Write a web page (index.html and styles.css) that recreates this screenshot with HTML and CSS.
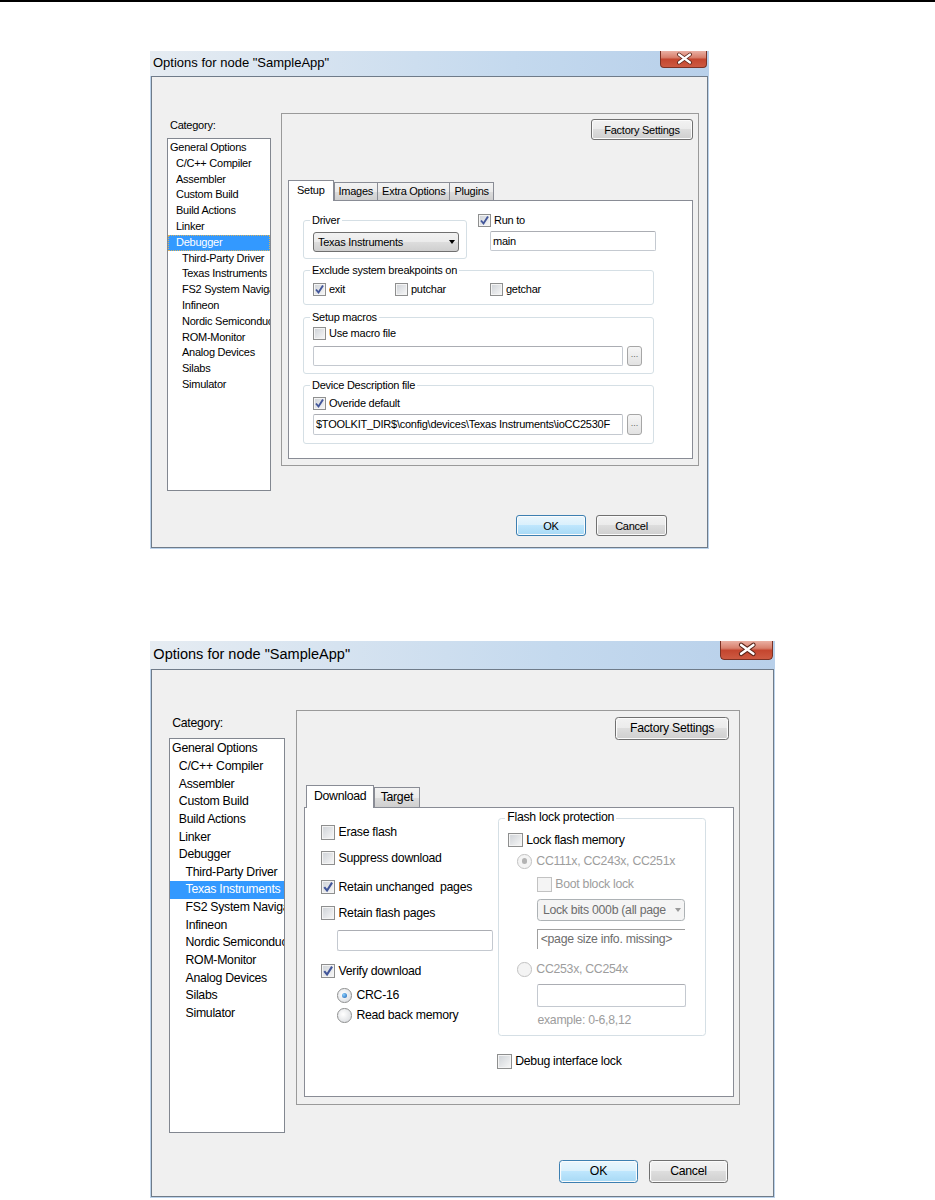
FILE: index.html
```html
<!DOCTYPE html>
<html>
	<head>
		<meta charset="utf-8">
		<title>Options for node "SampleApp"</title>
		<link rel="stylesheet" href="styles.css">
	</head>
	<body>
		<div class="rule"></div>
		<div class="page">

			<!-- Debugger > Setup -->
			<div class="window">
				<div class="titlebar">
					<span class="title">Options for node "SampleApp"</span>
					<div class="close">
						<svg width="47" height="16" viewBox="0 0 47 16">
							<path d="M18 3.5 L29 11.5 M29 3.5 L18 11.5" stroke="#5a2419" stroke-width="4" stroke-linecap="round"/>
							<path d="M18 3.5 L29 11.5 M29 3.5 L18 11.5" stroke="#fff" stroke-width="2.2" stroke-linecap="round"/>
						</svg>
					</div>
				</div>
				<div class="client">
					<div class="main">
						<div class="category">
							<div class="cat-label">Category:</div>
							<ul class="list">
								<li>General Options</li>
								<li class="l1">C/C++ Compiler</li>
								<li class="l1">Assembler</li>
								<li class="l1">Custom Build</li>
								<li class="l1">Build Actions</li>
								<li class="l1">Linker</li>
								<li class="l1 sel focus">Debugger</li>
								<li class="l2">Third-Party Driver</li>
								<li class="l2">Texas Instruments</li>
								<li class="l2">FS2 System Navigator</li>
								<li class="l2">Infineon</li>
								<li class="l2">Nordic Semiconductor</li>
								<li class="l2">ROM-Monitor</li>
								<li class="l2">Analog Devices</li>
								<li class="l2">Silabs</li>
								<li class="l2">Simulator</li>
							</ul>
						</div>
						<div class="panel">
							<div class="panel-top"><button class="btn factory">Factory Settings</button></div>
							<div class="tabs">
								<div class="tab active">Setup</div>
								<div class="tab">Images</div>
								<div class="tab">Extra Options</div>
								<div class="tab">Plugins</div>
							</div>
							<div class="tabpage setup">
								<div class="top-row">
									<div class="group driver">
										<span class="legend">Driver</span>
										<div class="combo">Texas Instruments<span class="arrow"></span></div>
									</div>
									<div class="runto">
										<label class="check"><span class="cb"><svg width="11" height="11" viewBox="0 0 11 11"><path d="M2 5.5 L4.5 8.5 L9 1.5" stroke="#42569a" stroke-width="1.9" fill="none"/></svg></span>Run to</label>
										<div class="edit main-edit">main</div>
									</div>
								</div>
								<div class="group bps">
									<span class="legend">Exclude system breakpoints on</span>
									<div class="opts">
										<label class="check"><span class="cb"><svg width="11" height="11" viewBox="0 0 11 11"><path d="M2 5.5 L4.5 8.5 L9 1.5" stroke="#42569a" stroke-width="1.9" fill="none"/></svg></span>exit</label>
										<label class="check"><span class="cb"></span>putchar</label>
										<label class="check"><span class="cb"></span>getchar</label>
									</div>
								</div>
								<div class="group macros">
									<span class="legend">Setup macros</span>
									<label class="check"><span class="cb"></span>Use macro file</label>
									<div class="file">
										<div class="edit"></div>
										<div class="more">...</div>
									</div>
								</div>
								<div class="group device">
									<span class="legend">Device Description file</span>
									<label class="check"><span class="cb"><svg width="11" height="11" viewBox="0 0 11 11"><path d="M2 5.5 L4.5 8.5 L9 1.5" stroke="#42569a" stroke-width="1.9" fill="none"/></svg></span>Overide default</label>
									<div class="file">
										<div class="edit">$TOOLKIT_DIR$\config\devices\Texas Instruments\ioCC2530F</div>
										<div class="more">...</div>
									</div>
								</div>
							</div>
						</div>
					</div>
					<div class="actions">
						<button class="btn default ok">OK</button>
						<button class="btn cancel">Cancel</button>
					</div>
				</div>
			</div>

			<!-- Debugger > Texas Instruments > Download -->
			<div class="window big">
				<div class="titlebar">
					<span class="title">Options for node "SampleApp"</span>
					<div class="close">
						<svg width="47" height="16" viewBox="0 0 47 16">
							<path d="M18 3.5 L29 11.5 M29 3.5 L18 11.5" stroke="#5a2419" stroke-width="4" stroke-linecap="round"/>
							<path d="M18 3.5 L29 11.5 M29 3.5 L18 11.5" stroke="#fff" stroke-width="2.2" stroke-linecap="round"/>
						</svg>
					</div>
				</div>
				<div class="client">
					<div class="main">
						<div class="category">
							<div class="cat-label">Category:</div>
							<ul class="list">
								<li>General Options</li>
								<li class="l1">C/C++ Compiler</li>
								<li class="l1">Assembler</li>
								<li class="l1">Custom Build</li>
								<li class="l1">Build Actions</li>
								<li class="l1">Linker</li>
								<li class="l1">Debugger</li>
								<li class="l2">Third-Party Driver</li>
								<li class="l2 sel">Texas Instruments</li>
								<li class="l2">FS2 System Navigator</li>
								<li class="l2">Infineon</li>
								<li class="l2">Nordic Semiconductor</li>
								<li class="l2">ROM-Monitor</li>
								<li class="l2">Analog Devices</li>
								<li class="l2">Silabs</li>
								<li class="l2">Simulator</li>
							</ul>
						</div>
						<div class="panel narrow">
							<div class="panel-top"><button class="btn factory">Factory Settings</button></div>
							<div class="tabs">
								<div class="tab active">Download</div>
								<div class="tab">Target</div>
							</div>
							<div class="tabpage download">
								<div class="dl-left">
									<label class="check"><span class="cb"></span>Erase flash</label>
									<label class="check suppress"><span class="cb"></span>Suppress download</label>
									<label class="check retain"><span class="cb"><svg width="11" height="11" viewBox="0 0 11 11"><path d="M2 5.5 L4.5 8.5 L9 1.5" stroke="#42569a" stroke-width="1.9" fill="none"/></svg></span>Retain unchanged&nbsp; pages</label>
									<label class="check retain-flash"><span class="cb"></span>Retain flash pages</label>
									<div class="edit pages"></div>
									<label class="check verify"><span class="cb"><svg width="11" height="11" viewBox="0 0 11 11"><path d="M2 5.5 L4.5 8.5 L9 1.5" stroke="#42569a" stroke-width="1.9" fill="none"/></svg></span>Verify download</label>
									<label class="radio crc"><span class="rb on"></span>CRC-16</label>
									<label class="radio readback"><span class="rb"></span>Read back memory</label>
								</div>
								<div class="dl-right">
									<div class="group flash">
										<span class="legend">Flash lock protection</span>
										<label class="check lockmem"><span class="cb"></span>Lock flash memory</label>
										<label class="radio off cc1"><span class="rb on"></span>CC111x, CC243x, CC251x</label>
										<label class="check off boot"><span class="cb"></span>Boot block lock</label>
										<div class="combo off lockbits"><span class="combo-text">Lock bits 000b (all page</span><span class="arrow"></span></div>
										<div class="edit static">&lt;page size info. missing&gt;</div>
										<label class="radio off cc2"><span class="rb"></span>CC253x, CC254x</label>
										<div class="edit range"></div>
										<div class="hint">example: 0-6,8,12</div>
									</div>
									<label class="check debuglock"><span class="cb"></span>Debug interface lock</label>
								</div>
							</div>
						</div>
					</div>
					<div class="actions">
						<button class="btn default ok">OK</button>
						<button class="btn cancel">Cancel</button>
					</div>
				</div>
			</div>

		</div>
	</body>
</html>
```

FILE: styles.css
```css
body{
	margin:0;
	background:#fff;
	font-family:"Liberation Sans", Arial, sans-serif;
	font-size:11px;
	letter-spacing:-0.25px;
	color:#000;
}
.rule{
	height:2px;
	background:#000;
}
.page{
	display:flex;
	flex-direction:column;
	align-items:flex-start;
	gap:92px;
	padding:49px 0 0 150px;
}

/* window chrome */
.window{
	width:559px;
	height:498px;
	box-sizing:border-box;
	display:flex;
	flex-direction:column;
	background:#bcd3eb;
	padding:0 1px 1px 1px;
}
.big{
	zoom:1.118;
}
.titlebar{
	height:25px;
	margin:0 -1px;
	display:flex;
	justify-content:space-between;
	align-items:flex-start;
	background:linear-gradient(to right, #e6ecf2 0%, #d6e3f0 30%, #c4d9ee 65%, #b8d0ea 100%);
}
.title{
	font-size:13px;
	letter-spacing:0;
	line-height:24px;
	padding-left:3px;
}
.close{
	width:47px;
	height:17px;
	margin-right:2px;
	box-sizing:border-box;
	border:1px solid #7c3225;
	border-top:none;
	border-radius:0 0 4px 4px;
	background:linear-gradient(#eab0a3 0%, #d8806d 40%, #c4462f 52%, #cd5a42 100%);
}
.close svg{
	display:block;
}
.client{
	flex:1;
	min-height:0;
	display:flex;
	flex-direction:column;
	background:#f0f0f0;
	border:1px solid #6f7b89;
}
.main{
	display:flex;
	align-items:flex-start;
	padding:36px 0 0 15px;
}

/* category list */
.category{
	width:104px;
	margin-right:10px;
}
.cat-label{
	margin:5px 0 6px 3px;
	line-height:14px;
}
.list{
	height:353px;
	box-sizing:border-box;
	margin:0;
	padding:1px 0 0 0;
	list-style:none;
	background:#fff;
	border:1px solid #828790;
	overflow:hidden;
}
.list li{
	height:15.8px;
	line-height:15.8px;
	padding-left:2px;
	white-space:nowrap;
	overflow:hidden;
}
.list .l1{
	padding-left:8px;
}
.list .l2{
	padding-left:14px;
}
.list .sel{
	background:#3399ff;
	color:#fff;
}
.list .focus{
	outline:1px dotted #d9b25c;
	outline-offset:-1px;
}

/* options panel */
.panel{
	width:418px;
	height:353px;
	box-sizing:border-box;
	border:1px solid #9a9a9a;
	padding:5px 5px 6px 6px;
	display:flex;
	flex-direction:column;
}
.panel.narrow{
	width:397px;
}
.panel-top{
	display:flex;
	justify-content:flex-end;
}
.narrow .panel-top{
	padding-right:4px;
}
.btn{
	font:inherit;
	letter-spacing:inherit;
	color:#000;
	height:21px;
	padding:0;
	box-sizing:border-box;
	border:1px solid #707070;
	border-radius:3px;
	background:linear-gradient(#f2f2f2 0%, #ebebeb 49%, #dddddd 50%, #cfcfcf 100%);
	box-shadow:inset 0 0 0 1px #fbfbfb;
}
.btn.default{
	border-color:#3c7fb1;
	background:linear-gradient(#eaf6fd 0%, #d9f0fc 49%, #bee6fd 50%, #a7d9f5 100%);
}
.factory{
	width:102px;
}
.tabs{
	display:flex;
	align-items:flex-end;
	height:21px;
	margin-top:40px;
	margin-bottom:-1px;
	position:relative;
	z-index:1;
}
.narrow .tabs{
	padding-left:2px;
}
.tab{
	height:18px;
	margin-bottom:1px;
	margin-left:-1px;
	box-sizing:border-box;
	border:1px solid #898c95;
	border-bottom:none;
	padding:0 4px;
	line-height:17px;
	background:linear-gradient(#f3f3f3 0%, #ebebeb 50%, #dddddd 51%, #cfcfcf 100%);
}
.tab.active{
	height:21px;
	margin:0;
	padding:0 8px;
	line-height:19px;
	background:#fff;
}
.narrow .tab{
	padding:0 5px;
}
.narrow .tab.active{
	padding:0 6px;
}
.tab.active + .tab{
	margin-left:0;
}
.tabpage{
	flex:1;
	background:#fff;
	border:1px solid #898c95;
}

/* controls */
.group{
	box-sizing:border-box;
	border:1px solid #d5dfe5;
	border-radius:3px;
	padding:0 0 0 9px;
}
.legend{
	display:block;
	width:max-content;
	margin:-8px 0 0 -3px;
	padding:0 2px;
	line-height:14px;
	background:#fff;
}
.check, .radio{
	display:flex;
	align-items:center;
	height:13px;
	line-height:13px;
	white-space:nowrap;
}
.cb{
	width:13px;
	height:13px;
	flex:none;
	box-sizing:border-box;
	margin-right:3px;
	border:1px solid #8e8f8f;
	background:linear-gradient(135deg, #cdd1d6, #f8f8f8);
	box-shadow:inset 0 0 0 1px #f4f4f4;
}
.cb svg{
	display:block;
}
.rb{
	width:13px;
	height:13px;
	flex:none;
	box-sizing:border-box;
	margin-right:4px;
	border:1px solid #8e8f8f;
	border-radius:50%;
	background:radial-gradient(circle at 40% 40%, #fff, #d4d7db);
	display:flex;
	align-items:center;
	justify-content:center;
}
.rb.on::after{
	content:"";
	width:5px;
	height:5px;
	border-radius:50%;
	background:radial-gradient(circle at 35% 35%, #8ad0ff, #1c5fb0);
}
.off{
	color:#9d9d9d;
}
.off .cb, .off .rb{
	border-color:#c2c2c2;
	background:#f4f4f4;
	box-shadow:none;
}
.off .rb.on::after{
	background:#b3b3b3;
}
.edit{
	height:20px;
	box-sizing:border-box;
	border:1px solid #c4c9d0;
	border-top-color:#abadb3;
	border-radius:2px;
	background:#fff;
	padding:0 2px;
	line-height:18px;
	white-space:nowrap;
	overflow:hidden;
}
.combo{
	display:flex;
	align-items:center;
	justify-content:space-between;
	height:20px;
	box-sizing:border-box;
	border:1px solid #707070;
	border-radius:3px;
	padding:0 3px 0 4px;
	background:linear-gradient(#f2f2f2 0%, #ebebeb 49%, #dddddd 50%, #cfcfcf 100%);
	white-space:nowrap;
}
.combo-text{
	overflow:hidden;
}
.arrow{
	flex:none;
	width:0;
	height:0;
	margin-left:4px;
	border-left:3.5px solid transparent;
	border-right:3.5px solid transparent;
	border-top:4px solid #000;
}
.combo.off{
	color:#6d6d6d;
	border-color:#adb2b5;
	background:#f4f4f4;
}
.combo.off .arrow{
	border-top-color:#9a9a9a;
}
.more{
	width:15px;
	height:20px;
	flex:none;
	box-sizing:border-box;
	border:1px solid #a6a6a6;
	border-radius:3px;
	background:linear-gradient(#f6f6f6, #e2e2e2);
	color:#666;
	font-size:9px;
	line-height:15px;
	text-align:center;
	letter-spacing:0;
}

/* setup tab */
.setup{
	padding:13px 0 0 14px;
}
.top-row{
	display:flex;
	align-items:flex-start;
}
.driver{
	width:164px;
	height:39px;
	margin-top:6px;
}
.driver .combo{
	width:146px;
	margin-top:5px;
}
.runto{
	margin-left:11px;
}
.main-edit{
	width:166px;
	margin:4px 0 0 12px;
}
.bps{
	width:351px;
	height:35px;
	margin-top:11px;
}
.opts{
	display:flex;
	margin-top:6px;
}
.opts .check:nth-child(1){
	width:82px;
}
.opts .check:nth-child(2){
	width:95px;
}
.macros{
	width:351px;
	height:57px;
	margin-top:12px;
}
.macros .check{
	margin-top:3px;
}
.macros .file{
	margin-top:6px;
}
.device{
	width:351px;
	height:59px;
	margin-top:11px;
}
.device .check{
	margin-top:5px;
}
.device .file{
	margin-top:4px;
}
.device .edit, .device .more{
	height:21px;
}
.device .more{
	line-height:16px;
}
.file{
	display:flex;
	gap:4px;
}
.file .edit{
	width:310px;
}

/* download tab */
.download{
	display:flex;
	align-items:flex-start;
}
.dl-left{
	width:173px;
	box-sizing:border-box;
	padding:15px 0 0 14px;
	display:flex;
	flex-direction:column;
	align-items:flex-start;
}
.suppress{
	margin-top:10px;
}
.retain{
	margin-top:13px;
}
.retain-flash{
	margin-top:10px;
}
.pages{
	width:139px;
	height:19px;
	margin:9px 0 0 15px;
}
.verify{
	margin-top:11px;
}
.crc{
	margin:9px 0 0 15px;
}
.readback{
	margin:5px 0 0 15px;
}
.dl-right{
	padding-top:9px;
}
.flash{
	width:186px;
	height:195px;
	padding-left:8px;
}
.lockmem{
	margin-top:6px;
}
.cc1{
	margin:6px 0 0 8px;
}
.boot{
	margin:8px 0 0 26px;
}
.lockbits{
	width:132px;
	margin:6px 0 0 26px;
}
.static{
	width:132px;
	height:18px;
	margin:7px 0 0 26px;
	border:none;
	border-top:1px solid #a0a0a0;
	border-left:1px solid #a0a0a0;
	border-radius:0;
	color:#6d6d6d;
	line-height:17px;
}
.cc2{
	margin:12px 0 0 8px;
}
.range{
	width:133px;
	height:21px;
	margin:6px 0 0 26px;
}
.hint{
	margin:5px 0 0 26px;
	line-height:14px;
	color:#9d9d9d;
}
.debuglock{
	margin:16px 0 0 -1px;
}

/* buttons row */
.actions{
	display:flex;
	justify-content:flex-end;
	gap:10px;
	margin-top:24px;
	padding-right:40px;
}
.ok{
	width:70px;
}
.cancel{
	width:71px;
}
```
